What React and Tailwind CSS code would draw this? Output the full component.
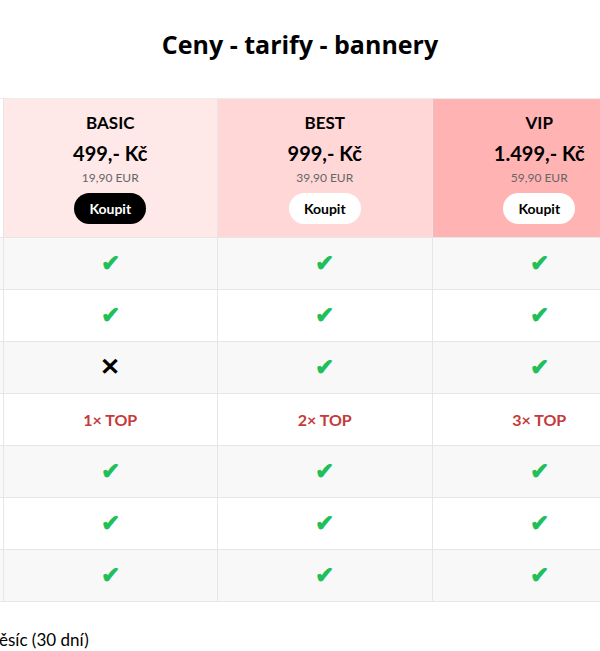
import React from 'react';

const plans = [
  { name: 'BASIC', price: '499,- Kč', eur: '19,90 EUR', bg: 'bg-[#fee8e8]', dark: true },
  { name: 'BEST', price: '999,- Kč', eur: '39,90 EUR', bg: 'bg-[#ffd7d7]', dark: false },
  { name: 'VIP', price: '1.499,- Kč', eur: '59,90 EUR', bg: 'bg-[#ffb3b3]', dark: false },
];

const rows = [
  { label: 'Banner na hlavní stránce', values: ['check', 'check', 'check'] },
  { label: 'Banner v detailu', values: ['check', 'check', 'check'] },
  { label: 'Banner ve výpisu', values: ['cross', 'check', 'check'] },
  { label: 'Topování', values: ['1× TOP', '2× TOP', '3× TOP'] },
  { label: 'Statistiky', values: ['check', 'check', 'check'] },
  { label: 'Odkaz na web', values: ['check', 'check', 'check'] },
  { label: 'Podpora', values: ['check', 'check', 'check'] },
];

const Cell = ({ value }) => {
  if (value === 'check') return <span className="text-[23px] leading-none font-bold text-[#1fbf5a]">✔</span>;
  if (value === 'cross') return <span className="text-[24px] leading-none font-bold text-black">✕</span>;
  return <span className="text-[16px] font-bold text-[#c53a3a]">{value}</span>;
};

const App = () => {
  return (
    <div className="min-h-screen bg-white font-['Lato',sans-serif] text-black">
      <h1 className="pt-[28px] pb-[38px] text-center font-['Open_Sans',sans-serif] text-[25px] leading-[32px] font-bold">
        Ceny - tarify - bannery
      </h1>

      <div className="overflow-hidden">
        <div className="-ml-[211px] w-[858px]">
          <table className="w-full table-fixed border-collapse">
            <thead>
              <tr className="border-t border-[#ececec]">
                <th className="w-[214px] border-r border-[#e6e6e6] bg-white"></th>
                {plans.map((p) => (
                  <th key={p.name} className={`${p.bg} h-[139px] border-r border-[#e6e6e6] pt-[13px] pb-[12px] align-top`}>
                    <div className="text-[17px] leading-[22px] font-bold">{p.name}</div>
                    <div className="mt-[7px] text-[20px] leading-[24px] font-bold">{p.price}</div>
                    <div className="mt-[4px] text-[12px] leading-[18px] font-normal text-[#666]">{p.eur}</div>
                    <button
                      className={`mt-[6px] h-[31px] rounded-full px-[15px] text-[14px] font-bold ${p.dark ? 'bg-black text-white' : 'bg-white text-black'}`}
                    >
                      Koupit
                    </button>
                  </th>
                ))}
              </tr>
            </thead>
            <tbody>
              {rows.map((r, i) => (
                <tr key={r.label} className={`h-[52px] border-t border-[#e6e6e6] ${i % 2 === 0 ? 'bg-[#f8f8f8]' : 'bg-white'}`}>
                  <td className="border-r border-[#e6e6e6] px-4 text-[15px]">{r.label}</td>
                  {r.values.map((v, j) => (
                    <td key={j} className="border-r border-[#e6e6e6] text-center">
                      <Cell value={v} />
                    </td>
                  ))}
                </tr>
              ))}
              <tr className="border-t border-[#e6e6e6]"></tr>
            </tbody>
          </table>
          <p className="mt-[27px] ml-[196px] text-[17px] leading-[22px]">měsíc (30 dní)</p>
        </div>
      </div>
    </div>
  );
};

export default App;
